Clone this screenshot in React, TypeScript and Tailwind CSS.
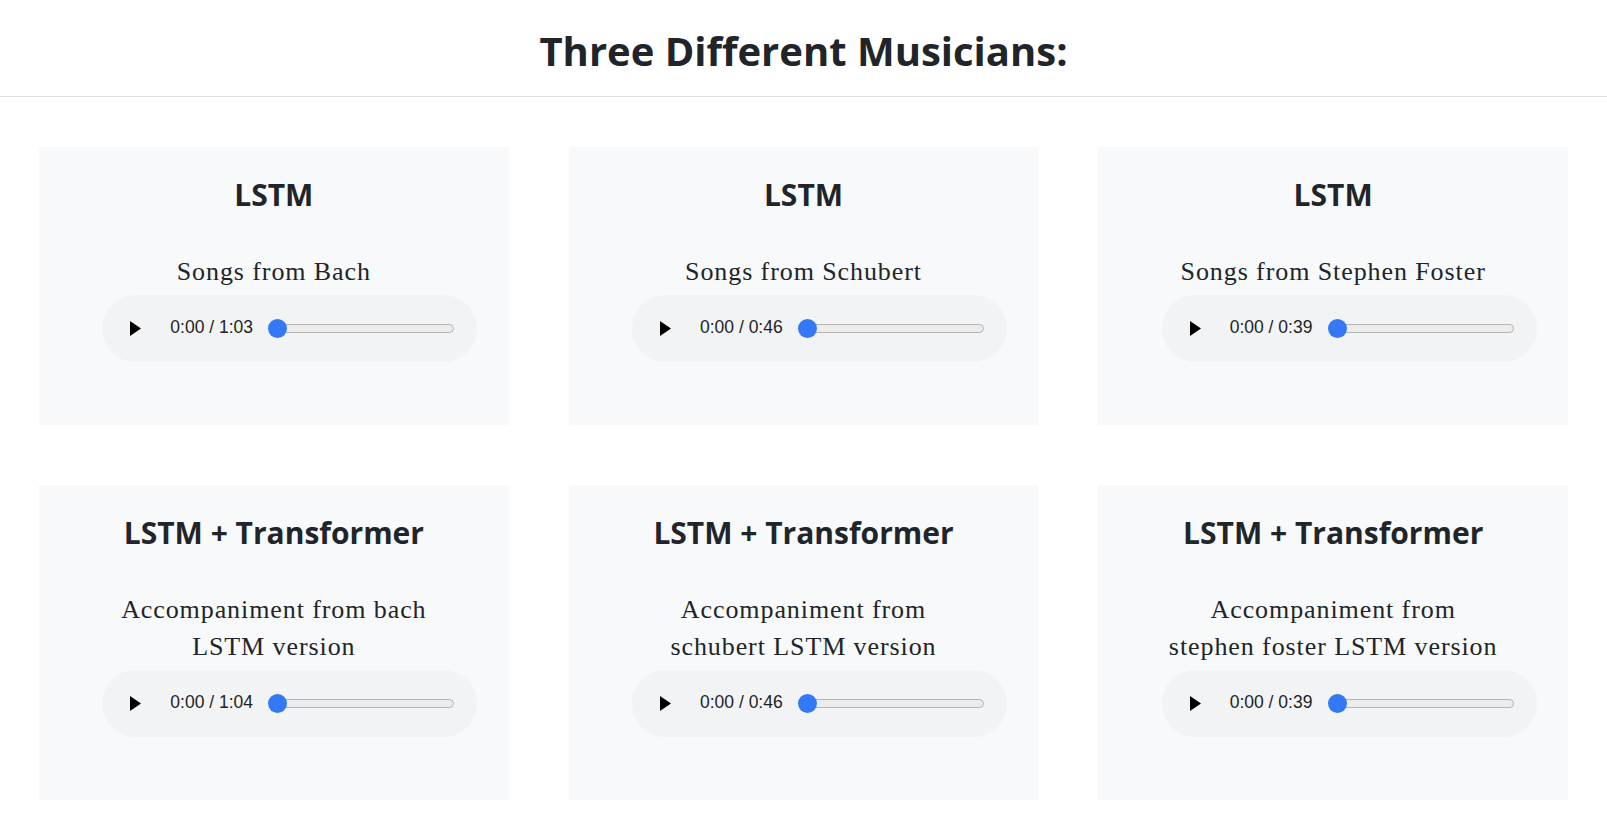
const cards = [
  { title: "LSTM", lines: ["Songs from Bach"], time: "0:00 / 1:03" },
  { title: "LSTM", lines: ["Songs from Schubert"], time: "0:00 / 0:46" },
  { title: "LSTM", lines: ["Songs from Stephen Foster"], time: "0:00 / 0:39" },
  { title: "LSTM + Transformer", lines: ["Accompaniment from bach", "LSTM version"], time: "0:00 / 1:04" },
  { title: "LSTM + Transformer", lines: ["Accompaniment from", "schubert LSTM version"], time: "0:00 / 0:46" },
  { title: "LSTM + Transformer", lines: ["Accompaniment from", "stephen foster LSTM version"], time: "0:00 / 0:39" },
];

function Player({ time }: { time: string }) {
  return (
    <div className="flex h-[67px] w-[375px] items-center rounded-full bg-[#f1f3f4]">
      <svg className="ml-[28px] shrink-0" width="11" height="15" viewBox="0 0 11 15">
        <path d="M0 0 L11 7.5 L0 15 Z" fill="#000" />
      </svg>
      <span className="ml-[29px] w-[98px] shrink-0 font-['Liberation_Sans',Arial,sans-serif] text-[17.5px] leading-none text-[#1f1f1f]">
        {time}
      </span>
      <div className="relative flex h-[19px] w-[186px] shrink-0 items-center">
        <div className="ml-[3px] h-[9px] flex-1 rounded-full border border-[#b4b4b4] bg-[#ececec]" />
        <div className="absolute left-0 top-0 h-[19px] w-[19px] rounded-full bg-[#3478f6]" />
      </div>
    </div>
  );
}

function Card({ title, lines, time }: { title: string; lines: string[]; time: string }) {
  return (
    <div className="flex flex-col items-center bg-[#f8f9fa] pb-[63px] pt-[30px] text-[#212529]">
      <h4 className="font-['Open_Sans',sans-serif] text-[30px] font-bold leading-[36px]">{title}</h4>
      <p className="mt-[40px] text-center font-['Liberation_Serif',serif] text-[26px] leading-[37.5px] tracking-[0.035em]">
        {lines.map((l, i) => (
          <span key={i} className="block">
            {l}
          </span>
        ))}
      </p>
      <div className="mt-[4px] pl-[32px]">
        <Player time={time} />
      </div>
    </div>
  );
}

export default function App() {
  return (
    <div className="min-h-screen bg-white">
      <header className="h-[97px] border-b border-[#dee2e6] pt-[27px] text-center">
        <h2 className="font-['Open_Sans',sans-serif] text-[40px] font-bold leading-[48px] text-[#212529]">
          Three Different Musicians:
        </h2>
      </header>
      <div className="grid grid-cols-3 gap-[60px] px-[39px] pt-[50px]">
        {cards.map((c, i) => (
          <Card key={i} {...c} />
        ))}
      </div>
    </div>
  );
}
